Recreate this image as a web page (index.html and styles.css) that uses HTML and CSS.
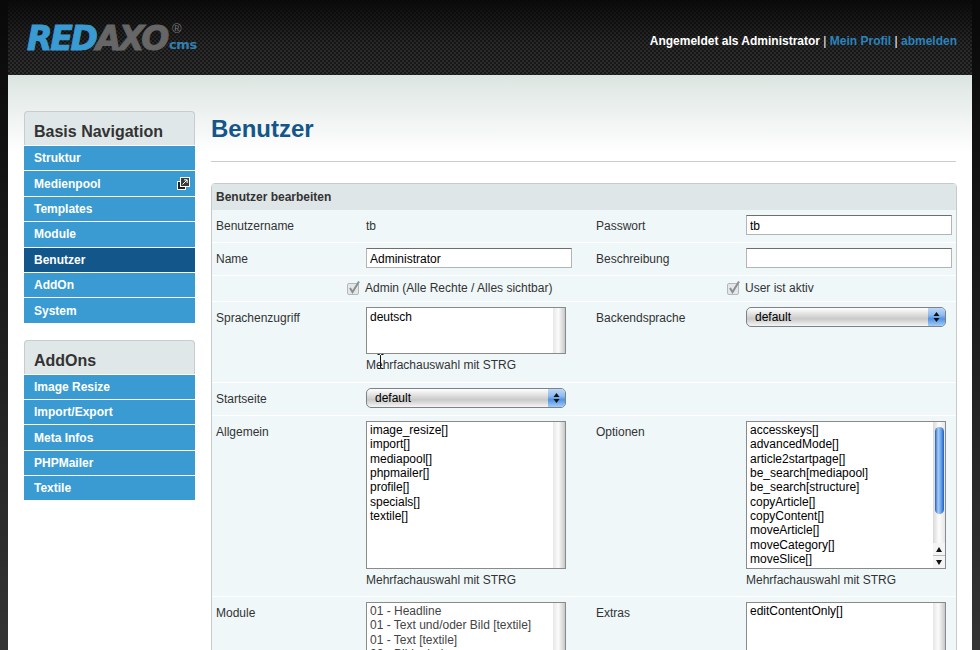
FILE: index.html
```html
<!DOCTYPE html>
<html lang="de">
<head>
    <meta charset="UTF-8">
    <meta name="viewport" content="width=device-width, initial-scale=1.0">
    <title>REDAXO - Benutzer</title>
    <link rel="stylesheet" href="styles.css">
</head>
<body>
    <div class="page">
        <header class="top">
            <div class="logo">
                <span class="logo-word"><span class="logo-red">RED</span><span class="logo-axo">AXO</span></span>
                <span class="logo-side">
                    <span class="logo-reg">®</span>
                    <span class="logo-cms">cms</span>
                </span>
            </div>
            <div class="account">
                <span>Angemeldet als Administrator</span>
                <span class="sep">|</span>
                <a href="#">Mein Profil</a>
                <span class="sep">|</span>
                <a href="#">abmelden</a>
            </div>
        </header>

        <div class="content">
            <aside class="side">
                <section class="nav-box">
                    <h2>Basis Navigation</h2>
                    <a class="nav-item" href="#">Struktur</a>
                    <a class="nav-item" href="#">Medienpool
                        <svg class="popup-icon" width="13" height="13" viewBox="0 0 13 13">
                            <rect x="0.5" y="4.5" width="8" height="8" fill="#222" stroke="#fff"/>
                            <rect x="3.5" y="0.5" width="9" height="9" fill="#3a3a3a" stroke="#fff"/>
                            <path d="M5.5 7.5 L10 3 M7 2.8 H10.2 V6" fill="none" stroke="#fff"/>
                        </svg>
                    </a>
                    <a class="nav-item" href="#">Templates</a>
                    <a class="nav-item" href="#">Module</a>
                    <a class="nav-item active" href="#">Benutzer</a>
                    <a class="nav-item" href="#">AddOn</a>
                    <a class="nav-item" href="#">System</a>
                </section>
                <section class="nav-box">
                    <h2>AddOns</h2>
                    <a class="nav-item" href="#">Image Resize</a>
                    <a class="nav-item" href="#">Import/Export</a>
                    <a class="nav-item" href="#">Meta Infos</a>
                    <a class="nav-item" href="#">PHPMailer</a>
                    <a class="nav-item" href="#">Textile</a>
                </section>
            </aside>

            <main class="main">
                <h1>Benutzer</h1>

                <form class="panel">
                    <h3>Benutzer bearbeiten</h3>

                    <div class="row">
                        <div class="label">Benutzername</div>
                        <div class="label">tb</div>
                        <div class="label">Passwort</div>
                        <div><input class="text-input" type="text" value="tb"></div>
                    </div>

                    <div class="row">
                        <div class="label">Name</div>
                        <div><input class="text-input" type="text" value="Administrator"></div>
                        <div class="label">Beschreibung</div>
                        <div><input class="text-input" type="text"></div>
                    </div>

                    <div class="row row-check">
                        <div></div>
                        <div class="check-label">
                            <svg class="check" width="14" height="16" viewBox="0 0 14 16">
                                <rect x="0.5" y="3.5" width="11" height="11" rx="1.5" fill="#e4e7e7" stroke="#b4b8b8"/>
                                <path d="M3 8 L5.5 12 L12 1.5" fill="none" stroke="#8b8f8f" stroke-width="2"/>
                            </svg>
                            Admin (Alle Rechte / Alles sichtbar)
                        </div>
                        <div></div>
                        <div class="check-label">
                            <svg class="check" width="14" height="16" viewBox="0 0 14 16">
                                <rect x="0.5" y="3.5" width="11" height="11" rx="1.5" fill="#e4e7e7" stroke="#b4b8b8"/>
                                <path d="M3 8 L5.5 12 L12 1.5" fill="none" stroke="#8b8f8f" stroke-width="2"/>
                            </svg>
                            User ist aktiv
                        </div>
                    </div>

                    <div class="row">
                        <div class="label">Sprachenzugriff</div>
                        <div class="cell-rel">
                            <div class="listbox lang-list">
                                <div class="options"><div>deutsch</div></div>
                                <div class="track"></div>
                            </div>
                            <div class="hint">Mehrfachauswahl mit STRG</div>
                            <svg class="ibeam" width="7" height="15" viewBox="0 0 7 15">
                                <path d="M0.5 0.5 H2.5 L3.5 1.5 L4.5 0.5 H6.5 M3.5 1.5 V13.5 M0.5 14.5 H2.5 L3.5 13.5 L4.5 14.5 H6.5" fill="none" stroke="#111"/>
                            </svg>
                        </div>
                        <div class="label">Backendsprache</div>
                        <div>
                            <div class="select">
                                <span class="select-text">default</span>
                                <span class="select-btn">
                                    <svg width="7" height="12" viewBox="0 0 7 12"><path d="M3.5 1 L6.5 5 H0.5 Z M0.5 7 H6.5 L3.5 11 Z" fill="#111"/></svg>
                                </span>
                            </div>
                        </div>
                    </div>

                    <div class="row">
                        <div class="label">Startseite</div>
                        <div>
                            <div class="select">
                                <span class="select-text">default</span>
                                <span class="select-btn">
                                    <svg width="7" height="12" viewBox="0 0 7 12"><path d="M3.5 1 L6.5 5 H0.5 Z M0.5 7 H6.5 L3.5 11 Z" fill="#111"/></svg>
                                </span>
                            </div>
                        </div>
                        <div></div>
                        <div></div>
                    </div>

                    <div class="row">
                        <div class="label">Allgemein</div>
                        <div>
                            <div class="listbox tall-list">
                                <div class="options">
                                    <div>image_resize[]</div>
                                    <div>import[]</div>
                                    <div>mediapool[]</div>
                                    <div>phpmailer[]</div>
                                    <div>profile[]</div>
                                    <div>specials[]</div>
                                    <div>textile[]</div>
                                </div>
                                <div class="track"></div>
                            </div>
                            <div class="hint">Mehrfachauswahl mit STRG</div>
                        </div>
                        <div class="label">Optionen</div>
                        <div>
                            <div class="listbox tall-list">
                                <div class="options">
                                    <div>accesskeys[]</div>
                                    <div>advancedMode[]</div>
                                    <div>article2startpage[]</div>
                                    <div>be_search[mediapool]</div>
                                    <div>be_search[structure]</div>
                                    <div>copyArticle[]</div>
                                    <div>copyContent[]</div>
                                    <div>moveArticle[]</div>
                                    <div>moveCategory[]</div>
                                    <div>moveSlice[]</div>
                                </div>
                                <div class="track track-active">
                                    <div class="thumb"></div>
                                    <div class="arrows">
                                        <span class="arrow-up"></span>
                                        <span class="arrow-down"></span>
                                    </div>
                                </div>
                            </div>
                            <div class="hint">Mehrfachauswahl mit STRG</div>
                        </div>
                    </div>

                    <div class="row">
                        <div class="label">Module</div>
                        <div>
                            <div class="listbox tall-list">
                                <div class="options options-muted">
                                    <div>01 - Headline</div>
                                    <div>01 - Text und/oder Bild [textile]</div>
                                    <div>01 - Text [textile]</div>
                                    <div>02 - Bildgalerie</div>
                                </div>
                                <div class="track"></div>
                            </div>
                        </div>
                        <div class="label">Extras</div>
                        <div>
                            <div class="listbox tall-list">
                                <div class="options"><div>editContentOnly[]</div></div>
                                <div class="track"></div>
                            </div>
                        </div>
                    </div>
                </form>
            </main>
        </div>
    </div>
</body>
</html>
```

FILE: styles.css
```css
* {
    box-sizing: border-box;
}
html, body {
    height: 100%;
    margin: 0;
    overflow: hidden;
}
body {
    font-family: "Liberation Sans", Arial, sans-serif;
    font-size: 12px;
    color: #333;
    background: linear-gradient(#080808 0, #343434 100%);
}
.page {
    margin: 0 8px;
    height: 650px;
    overflow: hidden;
    background: #fff;
}

/* header */
.top {
    height: 75px;
    display: flex;
    justify-content: space-between;
    padding: 22px 15px 0 19px;
    background:
        linear-gradient(rgba(8, 8, 8, 0.95) 0, rgba(8, 8, 8, 0.25) 45px, rgba(8, 8, 8, 0.15) 75px),
        repeating-conic-gradient(#343434 0 25%, #1a1a1a 0 50%) 0 0 / 4px 4px;
}
.logo {
    display: flex;
    height: 34px;
}
.logo-word {
    font-family: "DejaVu Sans", sans-serif;
    font-size: 33px;
    font-weight: bold;
    font-style: italic;
    letter-spacing: -2.2px;
    line-height: 34px;
    -webkit-text-stroke: 1px currentColor;
}
.logo-red {
    color: #3a9bd3;
}
.logo-axo {
    color: #666;
}
.logo-side {
    display: flex;
    flex-direction: column;
    padding-left: 2px;
}
.logo-reg {
    color: #777;
    font-size: 13px;
    line-height: 14px;
    padding-left: 3px;
}
.logo-cms {
    font-family: "DejaVu Sans", sans-serif;
    color: #2f80b4;
    font-size: 13px;
    font-weight: bold;
    line-height: 18px;
    letter-spacing: -0.4px;
}
.account {
    padding-top: 11px;
    height: 30px;
    line-height: 16px;
    font-weight: bold;
    color: #fff;
}
.account a {
    color: #2a83bb;
    text-decoration: none;
}
.account .sep {
    font-weight: normal;
}

/* layout */
.content {
    display: flex;
    gap: 16px;
    padding: 36px 15px 0 16px;
    height: 575px;
    background: linear-gradient(#dce5e1 0, #fff 78px);
}
.side {
    width: 171px;
    flex-shrink: 0;
}
.main {
    flex: 1;
}

/* navigation */
.nav-box {
    margin-bottom: 16.8px;
}
.nav-box h2 {
    margin: 0 0 1px;
    height: 34px;
    padding: 10px 0 0 9px;
    font-size: 16px;
    line-height: 20px;
    background: #e0e7e8;
    border: 1px solid #c9cccc;
    border-bottom: none;
    border-radius: 4px 4px 0 0;
}
.nav-item {
    display: flex;
    justify-content: space-between;
    align-items: center;
    height: 24.4px;
    margin-bottom: 1px;
    padding: 0 5px 0 10px;
    font-weight: bold;
    color: #fff;
    text-decoration: none;
    background: #3a9bd2;
}
.nav-item.active {
    background: #13568a;
}
.popup-icon {
    display: block;
}

/* title */
h1 {
    margin: 0 1px 21px 0;
    height: 51px;
    font-size: 24px;
    line-height: 36px;
    color: #14568a;
    border-bottom: 1px solid #ccc;
}

/* form */
.panel {
    border: 1px solid #c6caca;
    border-radius: 4px 4px 0 0;
    background: #eff7f9;
}
.panel h3 {
    margin: 0;
    height: 26px;
    padding-left: 4px;
    font-size: 12px;
    line-height: 26px;
    background: #dfe6e7;
}
.row {
    display: grid;
    grid-template-columns: 150px 230px 150px 1fr;
    padding: 5px 0 7px 4px;
    border-bottom: 1px solid #fff;
}
.row-check {
    padding: 4px 0 4px 4px;
}
.label {
    padding-top: 3px;
    line-height: 16px;
}
.text-input {
    display: block;
    width: 206px;
    height: 20px;
    padding: 2px 3px 0;
    font: 12px "Liberation Sans", Arial, sans-serif;
    color: #000;
    background: #fff;
    border: 1px solid #b4b4b4;
    border-top-color: #6e6e6e;
    outline: none;
}
.check-label {
    position: relative;
    margin-left: -1px;
    line-height: 17px;
}
.check {
    position: absolute;
    left: -18px;
    top: 0;
}
.cell-rel {
    position: relative;
}
.ibeam {
    position: absolute;
    left: 11px;
    top: 47px;
}

/* list boxes */
.listbox {
    display: flex;
    width: 200px;
    border: 1px solid #8a8a8a;
    background: #fff;
    overflow: hidden;
}
.lang-list {
    height: 47px;
}
.lang-list .options {
    padding-top: 2px;
}
.tall-list {
    height: 148px;
}
.options {
    flex: 1;
    padding: 1px 3px;
    line-height: 14.33px;
    color: #000;
}
.options-muted {
    color: #444;
}
.track {
    position: relative;
    width: 12px;
    background: linear-gradient(90deg, #e6e6e6 0, #fbfbfb 45%, #c8c8c8 100%);
}
.track-active {
    display: flex;
    flex-direction: column;
    justify-content: space-between;
    background: linear-gradient(90deg, #d8d8d8 0, #fdfdfd 50%, #e6e6e6 100%);
}
.thumb {
    margin: 5px 1px 0 2px;
    height: 87px;
    border-radius: 5px;
    background: linear-gradient(90deg, #1f5fc4 0, #a9cdf5 35%, #6ea4ea 65%, #1f5fc4 100%);
}
.arrows {
    height: 25px;
    display: flex;
    flex-direction: column;
    background: #f4f4f4;
}
.arrows span {
    flex: 1;
    display: flex;
    align-items: center;
    justify-content: center;
}
.arrow-up {
    border-bottom: 1px solid #bbb;
}
.arrow-up::before, .arrow-down::before {
    content: "";
    border-left: 3px solid transparent;
    border-right: 3px solid transparent;
}
.arrow-up::before {
    border-bottom: 5px solid #111;
}
.arrow-down::before {
    border-top: 5px solid #111;
}
.hint {
    margin: 3px 0 2px;
    line-height: 16px;
}
.tall-list + .hint {
    margin-bottom: 1px;
}

/* select */
.select {
    display: flex;
    width: 200px;
    height: 20px;
    border: 1px solid #7d8288;
    border-radius: 5px;
    overflow: hidden;
    background: linear-gradient(#fff 0, #e9e9e9 25%, #c9c9c9 60%, #f6f6f6 100%);
}
.select-text {
    flex: 1;
    padding-left: 8px;
    line-height: 19px;
    color: #000;
}
.select-btn {
    width: 17px;
    display: flex;
    align-items: center;
    justify-content: center;
    background: linear-gradient(#bcd8f6 0, #8dbbef 40%, #4f93e6 60%, #a5cdf7 100%);
}
```
